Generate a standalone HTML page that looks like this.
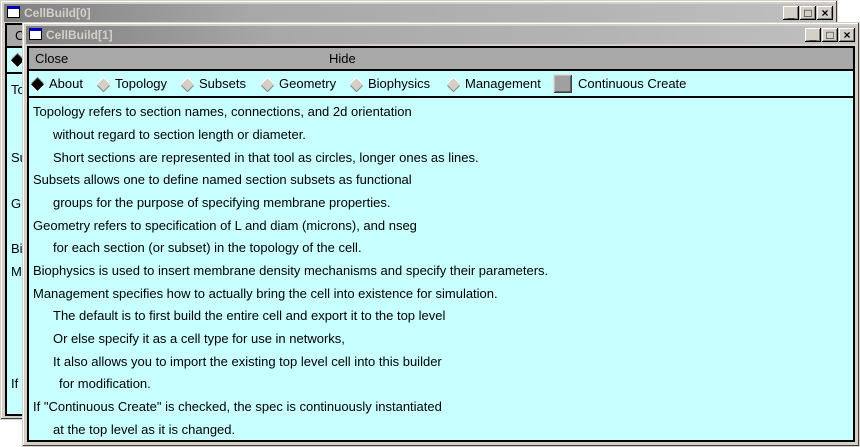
<!DOCTYPE html>
<html><head><style>
body{margin:0;width:860px;height:447px;background:#fff;position:relative;overflow:hidden;font-family:"Liberation Sans",sans-serif;font-size:13px;color:#000}
.win{position:absolute;background:#d4d0c8;border:1px solid #d4d0c8;box-shadow:inset -1px -1px #404040,inset 1px 1px #fff}
.tb{position:absolute;left:3px;right:3px;top:3px;height:18px;background:linear-gradient(90deg,#808080,#a8a8a8 30%,#b4b4b4 70%,#c0c0c0);color:#d4d0c8;font-weight:bold;font-size:12px;line-height:18px;padding-left:20px}
.ic{position:absolute;left:3px;top:2px;width:13px;height:12px;background:#fff;border:1px solid #000;border-top:3px solid #0000c0;box-sizing:border-box}
.btn{position:absolute;top:2px;width:16px;height:14px;background:#d4d0c8;box-shadow:inset -1px -1px #000,inset 1px 1px #fff,inset -2px -2px #808080;font-size:12px;line-height:14px;text-align:center;color:#000;font-weight:bold}
.menu{position:absolute;background:#a8a8a8;border:2px solid #000;box-sizing:border-box}
.radio{position:absolute;background:#c8ffff;border:2px solid #000;border-top:none;box-sizing:border-box}
.cont{position:absolute;background:#c8ffff;border:2px solid #000;border-top:none;box-sizing:border-box}
.dia{display:inline-block;width:9px;height:9px;transform:rotate(45deg);background:#d4d0c8;box-shadow:-1px -1px #fff,1px 1px #808080;margin:0 7px 0 5px;vertical-align:-1px}
.dia.on{background:#000;box-shadow:-1px -1px #808080,1px 1px #fff}
.r{position:absolute;top:5px}
.t{position:absolute;left:4px;white-space:nowrap}
.i{left:24px}
</style></head><body>
<div class="win" style="left:0;top:0;width:836px;height:418px">
 <div class="tb"><div class="ic"></div>CellBuild[0]
  <div class="btn" style="right:35px">_</div><div class="btn" style="right:18px">□</div><div class="btn" style="right:1px">×</div></div>
 <div class="menu" style="left:4px;top:22px;width:828px;height:25px"><span style="position:absolute;left:8px;top:3px">C</span></div>
 <div class="radio" style="left:4px;top:47px;width:828px;height:26px"><span class="dia on" style="margin-top:8px;margin-left:6px"></span></div>
 <div class="cont" style="left:4px;top:73px;width:828px;height:342px">
  <div class="t" style="top:8px">To</div><div class="t" style="top:76px">Su</div><div class="t" style="top:122px">G</div><div class="t" style="top:167px">Bi</div><div class="t" style="top:190px">M</div><div class="t" style="top:302px">If</div>
 </div>
</div>
<div class="win" style="left:22px;top:22px;width:836px;height:423px">
 <div class="tb"><div class="ic"></div>CellBuild[1]
  <div class="btn" style="right:35px">_</div><div class="btn" style="right:18px">□</div><div class="btn" style="right:1px">×</div></div>
 <div class="menu" style="left:4px;top:23px;width:828px;height:25px"><span style="position:absolute;left:6px;top:3px">Close</span><span style="position:absolute;left:300px;top:3px">Hide</span></div>
 <div class="radio" style="left:4px;top:48px;width:828px;height:27px">
  <span class="r" style="left:-1px"><span class="dia on"></span>About</span>
  <span class="r" style="left:65px"><span class="dia"></span>Topology</span>
  <span class="r" style="left:149px"><span class="dia"></span>Subsets</span>
  <span class="r" style="left:229px"><span class="dia"></span>Geometry</span>
  <span class="r" style="left:318px"><span class="dia"></span>Biophysics</span>
  <span class="r" style="left:415px"><span class="dia"></span>Management</span>
  <span style="position:absolute;left:524px;top:3px;width:19px;height:19px;background:#a0a0a0;box-shadow:inset 1px 1px #e0e0e0,inset -1px -1px #404040,inset 2px 2px #c0c0c0,inset -2px -2px #606060"></span>
  <span class="r" style="left:549px">Continuous Create</span>
 </div>
 <div class="cont" style="left:4px;top:75px;width:828px;height:344px">
  <div class="t" style="top:6px">Topology refers to section names, connections, and 2d orientation</div>
  <div class="t i" style="top:29px">without regard to section length or diameter.</div>
  <div class="t i" style="top:52px">Short sections are represented in that tool as circles, longer ones as lines.</div>
  <div class="t" style="top:74px">Subsets allows one to define named section subsets as functional</div>
  <div class="t i" style="top:97px">groups for the purpose of specifying membrane properties.</div>
  <div class="t" style="top:120px">Geometry refers to specification of L and diam (microns), and nseg</div>
  <div class="t i" style="top:142px">for each section (or subset) in the topology of the cell.</div>
  <div class="t" style="top:165px">Biophysics is used to insert membrane density mechanisms and specify their parameters.</div>
  <div class="t" style="top:188px">Management specifies how to actually bring the cell into existence for simulation.</div>
  <div class="t i" style="top:210px">The default is to first build the entire cell and export it to the top level</div>
  <div class="t i" style="top:233px">Or else specify it as a cell type for use in networks,</div>
  <div class="t i" style="top:256px">It also allows you to import the existing top level cell into this builder</div>
  <div class="t" style="top:278px;left:30px">for modification.</div>
  <div class="t" style="top:301px">If "Continuous Create" is checked, the spec is continuously instantiated</div>
  <div class="t i" style="top:324px">at the top level as it is changed.</div>
 </div>
</div>
</body></html>
